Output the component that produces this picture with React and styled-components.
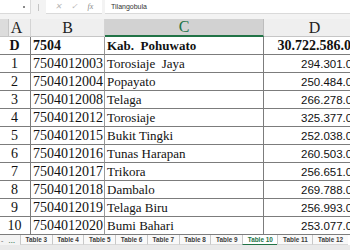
import React from "react";
import styled, { createGlobalStyle } from "styled-components";

const GlobalStyle = createGlobalStyle`
  html, body {
    margin: 0;
    padding: 0;
    background: #f3f3f3;
    overflow: hidden;
  }
`;

const Screen = styled.div`
  width: 350px;
  height: 250px;
  overflow: hidden;
  display: flex;
  flex-direction: column;
  background: #f3f3f3;
`;

const FormulaBar = styled.div`
  height: 14px;
  display: flex;
  align-items: stretch;
  flex-shrink: 0;
`;

const NameBox = styled.div`
  width: 31px;
  background: #fff;
  border-right: 1px solid #dadada;
  border-bottom: 1px solid #dadada;
  box-sizing: border-box;
  display: flex;
  align-items: center;
  justify-content: flex-end;
  padding-right: 5px;
`;

const Caret = styled.span`
  width: 2px;
  height: 2px;
  background: #8a8a8a;
`;

const Grip = styled.div`
  width: 15px;
  display: flex;
  align-items: center;
  justify-content: center;
  &::before {
    content: "";
    width: 1px;
    height: 7px;
    background: #c4c4c4;
  }
`;

const FxBox = styled.div`
  width: 56px;
  background: #fff;
  border-bottom: 1px solid #dadada;
  box-sizing: border-box;
  display: flex;
  align-items: center;
  justify-content: space-around;
  padding: 0 4px;
  margin-right: 3px;
  font-family: "Liberation Serif", serif;
  font-size: 8px;
  color: #b0b0b0;
`;

const FxGlyph = styled.span`
  font-style: italic;
  color: ${(p) => (p.$dark ? "#8a8a8a" : "#b8b8b8")};
`;

const FormulaInput = styled.div`
  flex: 1;
  background: #fff;
  border-bottom: 1px solid #dadada;
  box-sizing: border-box;
  display: flex;
  align-items: center;
  padding-left: 6px;
  font-family: "Liberation Sans", Arial, sans-serif;
  font-size: 7px;
  color: #333;
`;

const Sheet = styled.div`
  margin-top: 5px;
  width: 369px;
  display: grid;
  grid-template-columns: 31px 74px 159px 105px;
  grid-auto-rows: 18px;
  background: #fff;
`;

const HeadCell = styled.div`
  display: flex;
  align-items: center;
  justify-content: center;
  box-sizing: border-box;
  font-family: "Liberation Serif", "Times New Roman", serif;
  font-size: 16px;
  color: ${(p) => (p.$active ? "#217346" : "#222")};
  background: ${(p) =>
    p.$corner
      ? "linear-gradient(to right, #dcdcdc 0 8px, #c6c6c6 8px 9px, #efefef 9px)"
      : p.$active
      ? "#d2d2d2"
      : "#efefef"};
  border-right: 1px solid ${(p) => (p.$active ? "#bdbdbd" : "#d4d4d4")};
  border-bottom: ${(p) => (p.$active ? "2px solid #217346" : "1px solid #c6c6c6")};
  padding-left: ${(p) => (p.$corner ? "3px" : "0")};
  padding-right: ${(p) => (p.$wide ? "3px" : "0")};
`;

const Cell = styled.div`
  display: flex;
  align-items: center;
  box-sizing: border-box;
  overflow: hidden;
  white-space: pre;
  justify-content: ${(p) =>
    p.$align === "center" ? "center" : p.$align === "right" ? "flex-end" : "flex-start"};
  padding: 0 3px 0 2px;
  font-family: ${(p) =>
    p.$sans ? '"Liberation Sans", Arial, sans-serif' : '"Liberation Serif", "Times New Roman", serif'};
  font-size: ${(p) => p.$size || 14}px;
  font-weight: ${(p) => (p.$bold ? 700 : 400)};
  color: #111;
  border-bottom: 1px solid #7c7c7c;
  border-right: 1px solid ${(p) => p.$edge || "#7c7c7c"};
`;

const TabBar = styled.div`
  height: 10px;
  display: flex;
  align-items: stretch;
  background: #fff;
  flex-shrink: 0;
  font-family: "Liberation Sans", Arial, sans-serif;
  font-size: 6.4px;
  font-weight: 700;
`;

const Nav = styled.div`
  width: 19px;
  display: flex;
  align-items: center;
  gap: 5px;
  padding-left: 1px;
  color: #9a9a9a;
  background: #f3f3f3;
  font-size: 7px;
`;

const NavMore = styled.span`
  color: #5a8f6e;
`;

const Tab = styled.div`
  display: flex;
  align-items: center;
  padding: 0 4.6px;
  border-left: 1px solid #c8c8c8;
  color: ${(p) => (p.$active ? "#217346" : "#3c3c3c")};
  background: ${(p) => (p.$active ? "#fff" : "#f9f9f9")};
  border-bottom: ${(p) => (p.$active ? "1px solid #217346" : "1px solid #d8d8d8")};
  box-sizing: border-box;
`;

const Footer = styled.div`
  flex: 1;
  background: #e9e9e9;
`;

const rows = [
  ["1", "7504012003", "Torosiaje  Jaya", "294.301.000"],
  ["2", "7504012004", "Popayato", "250.484.000"],
  ["3", "7504012008", "Telaga", "266.278.000"],
  ["4", "7504012012", "Torosiaje", "325.377.000"],
  ["5", "7504012015", "Bukit Tingki", "252.038.000"],
  ["6", "7504012016", "Tunas Harapan", "260.503.000"],
  ["7", "7504012017", "Trikora", "256.651.000"],
  ["8", "7504012018", "Dambalo", "269.788.000"],
  ["9", "7504012019", "Telaga Biru", "256.993.000"],
  ["10", "7504012020", "Bumi Bahari", "253.077.000"],
];

const tabs = ["Table 3", "Table 4", "Table 5", "Table 6", "Table 7", "Table 8", "Table 9", "Table 10", "Table 11", "Table 12"];

export default function App() {
  return (
    <Screen>
      <GlobalStyle />
      <FormulaBar>
        <NameBox>
          <Caret />
        </NameBox>
        <Grip />
        <FxBox>
          <FxGlyph>✕</FxGlyph>
          <FxGlyph>✓</FxGlyph>
          <FxGlyph $dark>fx</FxGlyph>
        </FxBox>
        <FormulaInput>Tilangobula</FormulaInput>
      </FormulaBar>

      <Sheet>
        <HeadCell $corner>A</HeadCell>
        <HeadCell>B</HeadCell>
        <HeadCell $active>C</HeadCell>
        <HeadCell $wide>D</HeadCell>

        <Cell $align="center" $bold>D</Cell>
        <Cell $bold $edge="#9a9a9a">7504</Cell>
        <Cell $bold $size={13}>Kab.  Pohuwato</Cell>
        <Cell $align="right" $bold>30.722.586.000</Cell>

        {rows.map(([no, code, name, value]) => (
          <React.Fragment key={no}>
            <Cell $align="center">{no}</Cell>
            <Cell $edge="#9a9a9a">{code}</Cell>
            <Cell $size={13}>{name}</Cell>
            <Cell $align="right" $sans $size={11.5}>{value}</Cell>
          </React.Fragment>
        ))}
      </Sheet>

      <TabBar>
        <Nav>
          <span>-</span>
          <NavMore>…</NavMore>
        </Nav>
        {tabs.map((t) => (
          <Tab key={t} $active={t === "Table 10"}>
            {t}
          </Tab>
        ))}
      </TabBar>
      <Footer />
    </Screen>
  );
}
